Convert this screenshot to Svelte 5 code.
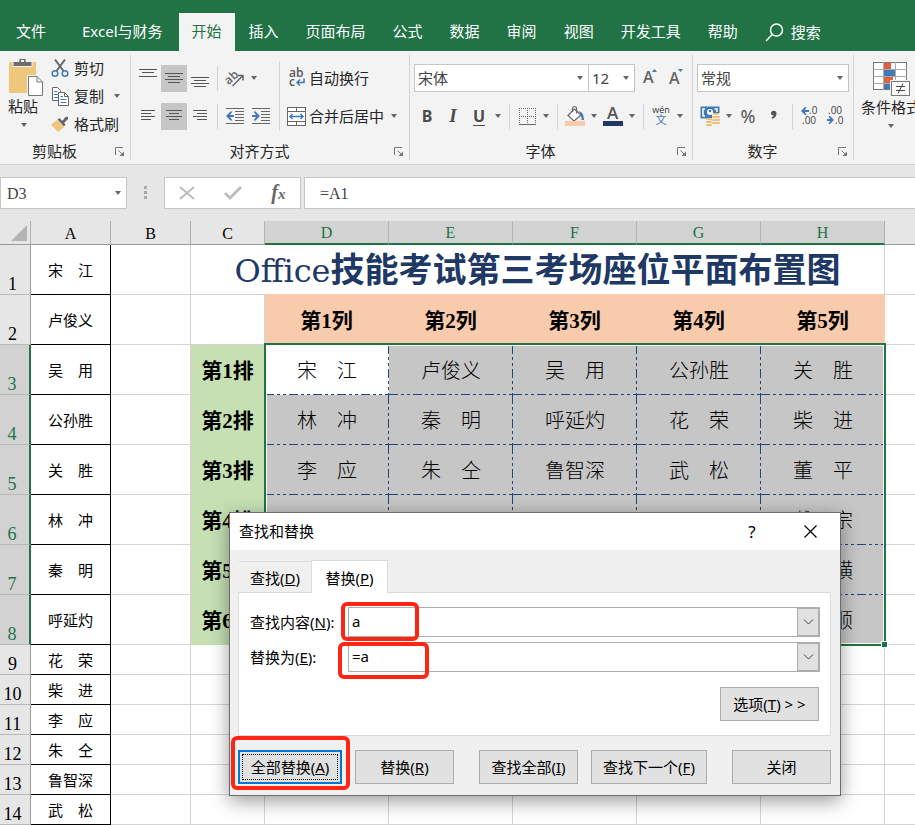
<script>
  const tabs = ['插入', '页面布局', '公式', '数据', '审阅', '视图', '开发工具', '帮助'];
  const seats = [
    ['宋　江', '卢俊义', '吴　用', '公孙胜', '关　胜'],
    ['林　冲', '秦　明', '呼延灼', '花　荣', '柴　进'],
    ['李　应', '朱　仝', '鲁智深', '武　松', '董　平'],
    ['', '', '', '', '戴　宗'],
    ['', '', '', '', '雷　横'],
    ['', '', '', '', '张　顺']
  ];
  const names = seats.flat();
  let findText = $state('a');
  let replaceText = $state('=a');
  let nameBox = $state('D3');
  let formula = $state('=A1');
</script>

{#snippet lines(list)}
  <svg width="18" height="18" viewBox="0 0 18 18" aria-hidden="true">
    {#each list as [x, y, w]}<rect {x} {y} width={w} height="1" fill="#555" />{/each}
  </svg>
{/snippet}

{#snippet launcher()}
  <button class="launcher" aria-label="更多设置">
    <svg width="10" height="10" viewBox="0 0 10 10" fill="none" stroke="#777"><path d="M.5 8V.5H8" /><path d="M3.500 3.500L8 8" /><path d="M9 4.500V9H4.500z" fill="#777" stroke="none" /></svg>
  </button>
{/snippet}

<div class="app">
  <nav class="tabs">
    <button class="file">文件</button>
    <button class="addin">Excel与财务</button>
    <button class="active">开始</button>
    {#each tabs as t}<button>{t}</button>{/each}
    <button class="search">
      <svg width="19" height="19" viewBox="0 0 19 19" fill="none" stroke="#fff" stroke-width="1.500"><circle cx="11.500" cy="7" r="6" /><path d="M7.200 11.500L1 18" /></svg>搜索
    </button>
  </nav>

  <div class="ribbon">
    <section class="group clip">
      <div class="body">
        <button class="big">
          <svg width="36" height="38" viewBox="0 0 36 38">
            <rect x="1" y="4" width="27" height="31" rx="1" fill="#eec77c" />
            <path d="M5 8.500V3.500H11V1.500Q11 .5 12 .5H17Q18 .5 18 1.500V3.500H24V8.500z" fill="#6d6d6d" stroke="#f3f3f3" />
            <rect x="13" y="2" width="3" height="2" fill="#f3f3f3" />
            <path d="M19 17H30L36 23V38H19z" fill="#f3f3f3" />
            <path d="M20.500 18.500H29L34.500 24V37.500H20.500z" fill="#fff" stroke="#777" />
            <path d="M29 18.500V24H34.500" fill="none" stroke="#777" />
          </svg>
          <span>粘贴</span><i class="caret"></i>
        </button>
        <div class="stack">
          <button class="item">
            <svg width="18" height="20" viewBox="0 0 18 20" fill="none"><path d="M4 1.500L12.500 13M14 1.500L5.500 13" stroke="#666" stroke-width="2" /><circle cx="4" cy="15.500" r="2.800" stroke="#4178b8" stroke-width="1.500" /><circle cx="14" cy="15.500" r="2.800" stroke="#4178b8" stroke-width="1.500" /></svg>
            <span>剪切</span>
          </button>
          <button class="item">
            <svg width="18" height="19" viewBox="0 0 18 19" fill="#fff" stroke="#666"><path d="M1.500.5H6.500L9.500 3.500V13.500H1.500z" /><path d="M3 4.500H6M3 7.500H7M3 10.500H7" stroke="#4178b8" /><path d="M7.500 5.500H13.500L17.500 9.500V18.500H7.500z" /><path d="M13.500 5.500V9.500H17.500" fill="none" /><path d="M9.500 9.500H12M9.500 12.500H15.500M9.500 15.500H15.500" stroke="#4178b8" /></svg>
            <span>复制</span><i class="caret"></i>
          </button>
          <button class="item">
            <svg width="18" height="16" viewBox="0 0 18 16"><path d="M6 4L13 11L9 14.500L7 16L0 8.500z" fill="#eec77c" /><path d="M6.500 3.500L8.500 2L14.500 8.500L13 10.500z" fill="#666" /><path d="M10.500 5.500L13 3Q13.500 .5 16 .5Q17.500 1 17 3L12.500 7.500z" fill="#666" /></svg>
            <span>格式刷</span>
          </button>
        </div>
      </div>
      <footer><span>剪贴板</span>{@render launcher()}</footer>
    </section>

    <section class="group align">
      <div class="body">
        <div class="rows">
          <div class="row">
            <button class="ic" aria-label="顶端对齐">{@render lines([[0, 0, 18], [3, 3, 12], [0, 7, 18]])}</button>
            <button class="ic on" aria-label="垂直居中">{@render lines([[0, 4, 18], [3, 7, 12], [0, 10, 18], [3, 13, 12]])}</button>
            <button class="ic" aria-label="底端对齐">{@render lines([[0, 8, 18], [3, 11, 12], [0, 14, 18], [3, 17, 12]])}</button>
            <i class="sep"></i>
            <button class="ic" aria-label="方向">
              <svg width="20" height="18" viewBox="0 0 20 18"><text x="0" y="13" transform="rotate(-42 6 10)" class="orient">ab</text><path d="M7.500 17L17.500 7M13 6.500H18V11.500" fill="none" stroke="#666" stroke-width="1.500" /></svg>
            </button>
            <button class="drop" aria-label="方向选项"><i class="caret"></i></button>
          </div>
          <div class="row">
            <button class="ic" aria-label="左对齐">{@render lines([[2, 3, 14], [2, 6, 10], [2, 9, 14], [2, 12, 10]])}</button>
            <button class="ic on" aria-label="居中">{@render lines([[1, 3, 16], [4, 6, 10], [1, 9, 16], [4, 12, 10]])}</button>
            <button class="ic" aria-label="右对齐">{@render lines([[2, 3, 14], [6, 6, 10], [2, 9, 14], [6, 12, 10]])}</button>
            <i class="sep"></i>
            <button class="ic" aria-label="减少缩进"><svg width="18" height="16" viewBox="0 0 18 16"><path d="M0 .5H18M9 3.500H18M9 6.500H18M9 9.500H18M9 12.500H18M0 15.500H18" stroke="#666" /><path d="M0 8L4.500 3.500H6.500L4 7H8V9H4L6.500 12.500H4.500z" fill="#4178b8" /></svg></button>
            <button class="ic" aria-label="增加缩进"><svg width="18" height="16" viewBox="0 0 18 16"><path d="M0 .5H18M9 3.500H18M9 6.500H18M9 9.500H18M9 12.500H18M0 15.500H18" stroke="#666" /><path d="M8 8L3.500 3.500H1.500L4 7H0V9H4L1.500 12.500H3.500z" fill="#4178b8" /></svg></button>
          </div>
        </div>
        <i class="sep tall"></i>
        <div class="rows">
          <button class="item wide">
            <svg width="20" height="20" viewBox="0 0 20 20"><text x="2" y="9" class="wrap">ab</text><text x="2" y="18" class="wrap">c</text><path d="M17 10.500V14.500H10M13 11.500L10 14.500L13 17.500" fill="none" stroke="#4178b8" stroke-width="1.500" /></svg>
            <span>自动换行</span>
          </button>
          <button class="item wide">
            <svg width="20" height="19" viewBox="0 0 20 19"><rect x=".5" y=".5" width="18" height="18" fill="#fff" stroke="#666" /><path d="M0 4.500H19M0 14.500H19M9.500 0V4M9.500 15V19" stroke="#666" /><path d="M3 9.500H16M5.500 7L3 9.500L5.500 12M13.500 7L16 9.500L13.500 12" fill="none" stroke="#4178b8" stroke-width="1.500" /></svg>
            <span>合并后居中</span><i class="caret"></i>
          </button>
        </div>
      </div>
      <footer><span>对齐方式</span>{@render launcher()}</footer>
    </section>

    <section class="group font">
      <div class="body rows">
        <div class="row fields">
          <label class="sel family"><select aria-label="字体"><option>宋体</option></select><i class="caret"></i></label>
          <label class="sel size"><select aria-label="字号"><option>12</option></select><i class="caret"></i></label>
          <button class="ic grow" aria-label="增大字号"><svg width="16" height="18" viewBox="0 0 16 18"><text x="1" y="14" class="letter">A</text><path d="M10 3L12.500 0L15 3z" fill="#4178b8" /></svg></button>
          <button class="ic" aria-label="减小字号"><svg width="16" height="18" viewBox="0 0 16 18"><text x="1" y="15" class="letter">A</text><path d="M10 0L12.500 3L15 0z" fill="#4178b8" /></svg></button>
        </div>
        <div class="row">
          <button class="ic fmt"><b>B</b></button>
          <button class="ic fmt it"><b>I</b></button>
          <button class="ic fmt"><b class="und">U</b></button>
          <button class="drop" aria-label="下划线选项"><i class="caret"></i></button>
          <i class="sep"></i>
          <button class="ic" aria-label="边框"><svg width="17" height="17" viewBox="0 0 17 17" stroke="#666" fill="none"><path d="M0 .5H17M0 8.500H17M.5 0V16M8.500 0V16M16.500 0V16" stroke-dasharray="1 1" /><path d="M0 16.500H17" /></svg></button>
          <button class="drop" aria-label="边框选项"><i class="caret"></i></button>
          <i class="sep"></i>
          <button class="ic" aria-label="填充颜色"><svg width="20" height="20" viewBox="0 0 20 20"><path d="M3 9.500L9.500 3L16 9L9 15z" fill="#fff" stroke="#666" stroke-width="1.200" /><path d="M7.500 6V2Q8 .5 9.500 .5T11.500 2V7.500" fill="none" stroke="#666" stroke-width="1.200" /><path d="M13.500 5Q19 6 19 14H16.500Q17 9 13.500 5z" fill="#4178b8" /><rect y="15" width="20" height="5" fill="#f8cbad" /></svg></button>
          <button class="drop" aria-label="填充选项"><i class="caret"></i></button>
          <button class="ic" aria-label="字体颜色"><svg width="20" height="20" viewBox="0 0 20 20"><text x="4" y="13" class="color">A</text><rect y="15" width="20" height="5" fill="#1f3864" /></svg></button>
          <button class="drop" aria-label="字体颜色选项"><i class="caret"></i></button>
          <i class="sep"></i>
          <button class="ic" aria-label="拼音"><svg width="18" height="20" viewBox="0 0 18 20"><text x="9" y="7" text-anchor="middle" class="wen">wén</text><text x="9" y="18" text-anchor="middle" class="zi">文</text></svg></button>
          <button class="drop" aria-label="拼音选项"><i class="caret"></i></button>
        </div>
      </div>
      <footer><span>字体</span>{@render launcher()}</footer>
    </section>

    <section class="group number">
      <div class="body rows">
        <div class="row fields">
          <label class="sel format"><select aria-label="数字格式"><option>常规</option></select><i class="caret"></i></label>
        </div>
        <div class="row">
          <button class="ic" aria-label="会计数字格式"><svg width="20" height="20" viewBox="0 0 20 20"><path d="M.5 .5H19.500V7H12V12.500H.5z" fill="#4178b8" /><path d="M5 3H3V10H5M14.500 3H17V6" fill="none" stroke="#fff" stroke-width="1.500" /><circle cx="10" cy="6" r="3" fill="#fff" /><circle cx="10" cy="5" r="1.300" fill="#4178b8" /><path d="M14 8H18M13 11H19M13 14H19M13 17H19M7 13H11M7 16H11M7 19H11" stroke="#eec077" stroke-width="2" stroke-linecap="round" /></svg></button>
          <button class="drop" aria-label="会计格式选项"><i class="caret"></i></button>
          <button class="ic pct">%</button>
          <button class="ic" aria-label="千位分隔样式"><svg width="8" height="12" viewBox="0 0 8 12"><path d="M1 3.500A2.500 2.500 0 1 1 6.500 3.500Q6.500 7.500 2 9L1.500 7.500Q3.500 7 3.500 5.500Q1 5.500 1 3.500z" fill="#555" /></svg></button>
          <i class="sep"></i>
          <button class="ic" aria-label="增加小数位数"><svg width="18" height="20" viewBox="0 0 18 20"><text x="8" y="8" class="dec">.0</text><text x="1" y="18" class="dec">.00</text><path d="M0 5L4 1H5.500L4 4H8V6H4L5.500 9H4z" fill="#4178b8" /></svg></button>
          <button class="ic" aria-label="减少小数位数"><svg width="18" height="20" viewBox="0 0 18 20"><text x="1" y="8" class="dec">.00</text><text x="8" y="18" class="dec">.0</text><path d="M7 14L3 10H1.500L3 13H0V15H3L1.500 18H3z" fill="#4178b8" /></svg></button>
        </div>
      </div>
      <footer><span>数字</span>{@render launcher()}</footer>
    </section>

    <section class="group cond">
      <button class="big">
        <svg width="38" height="38" viewBox="0 0 38 38">
          <rect x="1.500" y="3.500" width="33" height="27" fill="#fff" stroke="#777" />
          <path d="M1 10.500H35M1 17.500H35M1 24.500H35M11.500 3V31M23.500 3V31" stroke="#aaa" />
          <rect x="12" y="4" width="7" height="6" fill="#dc6141" /><rect x="12" y="11" width="11" height="6" fill="#4178b8" /><rect x="12" y="18" width="9" height="6" fill="#dc6141" /><rect x="12" y="25" width="6" height="5" fill="#4178b8" />
          <rect x="18" y="21" width="20" height="17" fill="#f3f3f3" /><rect x="19.500" y="22.500" width="18" height="14" fill="#fff" stroke="#777" />
          <path d="M24 27.500H33M24 31.500H33M31 24.500L26 34.500" stroke="#444" />
        </svg>
        <span>条件格式</span><i class="caret"></i>
      </button>
    </section>
  </div>

  <div class="formula">
    <label class="namebox"><input aria-label="名称框" bind:value={nameBox} /><i class="caret"></i></label>
    <i class="grip"></i>
    <div class="fx">
      <button aria-label="取消"><svg width="16" height="14" viewBox="0 0 16 14" fill="none" stroke="#bdbdbd" stroke-width="2"><path d="M1 1L15 13M15 1L1 13" /></svg></button>
      <button aria-label="输入"><svg width="18" height="14" viewBox="0 0 18 14" fill="none" stroke="#bdbdbd" stroke-width="3"><path d="M1 7L6 12L17 1" /></svg></button>
      <button class="fn" aria-label="插入函数">f<small>x</small></button>
    </div>
    <input class="bar" aria-label="编辑栏" bind:value={formula} />
  </div>

  <table>
    <colgroup><col class="c0" /><col class="ca" /><col class="ca" /><col class="cc" /><col class="cd" /><col class="cd" /><col class="cd" /><col class="cd" /><col class="cd" /><col /></colgroup>
    <thead>
      <tr>
        <th class="corner"><svg width="16" height="16" viewBox="0 0 16 16"><path d="M16 0V16H0z" fill="#b4b4b4" /></svg></th>
        {#each ['A', 'B', 'C', 'D', 'E', 'F', 'G', 'H'] as c, i}<th class:sel-col={i > 2}>{c}</th>{/each}
        <th class="rest"></th>
      </tr>
    </thead>
    <tbody>
      {#each Array(14) as _, r}
        <tr class:short={r > 7}>
          <th class:sel-row={r > 1 && r < 8}>{r + 1}</th>
          <td class="name">{names[r]}</td>
          <td></td>
          {#if r === 0}
            <td class="title" colspan="6"><span>Office</span>技能考试第三考场座位平面布置图</td>
          {:else if r === 1}
            <td></td>
            {#each [1, 2, 3, 4, 5] as n}<td class="colhead">第{n}列</td>{/each}
          {:else if r < 8}
            <td class="rowhead">第{r - 1}排</td>
            {#each seats[r - 2] as s, i}
              <td class="seat" class:first={r === 2 && i === 0}>{s}{#if r === 2 && i === 0}<div class="selection"><i></i></div>{/if}</td>
            {/each}
          {:else}
            <td></td><td></td><td></td><td></td><td></td><td></td>
          {/if}
          <td class="rest"></td>
        </tr>
      {/each}
    </tbody>
  </table>

  <div class="dialog" role="dialog" aria-label="查找和替换">
    <header>
      <span>查找和替换</span>
      <button class="help" aria-label="帮助">?</button>
      <button aria-label="关闭窗口"><svg width="13" height="13" viewBox="0 0 13 13" stroke="#000" fill="none" stroke-width="1.200"><path d="M.5 .5L12.500 12.500M12.500 .5L.5 12.500" /></svg></button>
    </header>
    <div class="dtabs"><button>查找(<u>D</u>)</button><button class="active">替换(<u>P</u>)</button></div>
    <div class="panel">
      <div class="field">
        <label for="find">查找内容(<u>N</u>):</label>
        <div class="combo"><input id="find" bind:value={findText} /><button aria-label="查找历史"><svg width="11" height="6" viewBox="0 0 11 6" fill="none" stroke="#444"><path d="M1 .5L5.500 5L10 .5" /></svg></button></div>
        <i class="mark m1"></i>
      </div>
      <div class="field">
        <label for="replace">替换为(<u>E</u>):</label>
        <div class="combo"><input id="replace" bind:value={replaceText} /><button aria-label="替换历史"><svg width="11" height="6" viewBox="0 0 11 6" fill="none" stroke="#444"><path d="M1 .5L5.500 5L10 .5" /></svg></button></div>
        <i class="mark m2"></i>
      </div>
      <button class="btn opt">选项(<u>T</u>) &gt; &gt;</button>
    </div>
    <div class="actions">
      <div class="pair">
        <div class="marked"><button class="btn default">全部替换(<u>A</u>)</button><i class="mark m3"></i></div>
        <button class="btn">替换(<u>R</u>)</button>
      </div>
      <div class="pair"><button class="btn">查找全部(<u>I</u>)</button><button class="btn long">查找下一个(<u>F</u>)</button></div>
      <button class="btn">关闭</button>
    </div>
  </div>
</div>

<style>
  :global(body) { margin: 0; overflow: hidden; background: #fff; }
  .app { position: relative; font: 15px/20px 'Noto Sans', 'Noto Sans CJK SC', sans-serif; color: #262626; }
  .app :is(button, input, select) { font: inherit; color: inherit; box-sizing: border-box; }
  .app button { background: none; border: 0; padding: 0; white-space: nowrap; }
  svg { display: block; flex: none; overflow: visible; }

  .app .tabs { display: flex; align-items: flex-end; gap: 1px; height: 51px; background: #217346; overflow: hidden; }
  .app .tabs button { height: 38px; padding: 0 13px 2px; color: #fff; display: flex; align-items: center; flex: none; }
  .app .tabs .file { padding-left: 16px; padding-right: 21px; }
  .app .tabs .addin { padding-left: 14px; padding-right: 15px; }
  .app .tabs .active { background: #f3f3f3; color: #217346; }
  .app .tabs .search { gap: 7px; padding-bottom: 0; }

  .ribbon { display: flex; height: 113px; background: #f3f3f3; border-bottom: 1px solid #d2d2d2; overflow: hidden; }
  .group { position: relative; flex: none; display: flex; flex-direction: column; justify-content: space-between; box-sizing: border-box; padding: 3px 0 0 4px; }
  .group::after { content: ''; position: absolute; right: 0; top: 4px; bottom: 4px; width: 1px; background: #d2d2d2; }
  .clip { width: 131px; }
  .align { width: 279px; }
  .font { width: 283px; }
  .number { width: 161px; }
  .cond { flex: 1 0 66px; }
  .cond::after { display: none; }
  .body { display: flex; }
  .group footer { display: flex; align-items: center; height: 24px; padding-right: 4px; }
  .group footer span { flex: 1; padding: 0 10px 3px 0; text-align: center; }
  .launcher { width: 12px; }
  .caret { flex: none; display: block; width: 0; height: 0; border: 3px solid transparent; border-top: 4px solid #666; border-bottom: 0; }
  .app .big { display: flex; flex-direction: column; align-items: center; }
  .app .clip .big { width: 38px; padding: 4px 0 0 4px; box-sizing: content-box; align-items: flex-start; }
  .app .cond .big { width: 66px; padding-top: 5px; }
  .clip .big .caret { margin-left: 13px; }
  .big .caret { margin-top: 7px; }
  .stack { margin-left: 5px; }
  .app .item { display: flex; align-items: center; height: 28px; gap: 5px; }
  .stack .caret, .wide .caret { margin-left: 5px; }
  .rows { display: flex; flex-direction: column; gap: 10px; padding-top: 10px; }
  .row { display: flex; align-items: center; height: 28px; }
  .app .ic { width: 26px; height: 27px; display: flex; align-items: center; justify-content: center; flex: none; }
  .app .on { background: #c6c6c6; }
  .app .drop { width: 12px; height: 27px; display: flex; align-items: center; justify-content: center; }
  .sep { flex: none; width: 1px; height: 25px; margin: 0 4px 0 5px; background: #d2d2d2; }
  .align .sep { margin-left: 4px; }
  .align .tall { height: 70px; margin: 7px 7px 0 5px; }
  .app .wide { gap: 2px; }
  .app .fmt { font-size: 16px; color: #4d4d4d; }
  .it b { font-family: 'Liberation Serif', serif; font-style: italic; font-size: 19px; }
  .und { line-height: 18px; border-bottom: 1px solid #4d4d4d; }
  .app .pct { font-size: 18px; color: #555; }
  .orient { font: 600 12px 'Open Sans', sans-serif; fill: #666; }
  .wrap { font: 600 12px 'Open Sans', sans-serif; fill: #555; }
  .letter { font: 600 16px 'Open Sans', sans-serif; fill: #666; }
  .color { font: 600 17px 'Open Sans', sans-serif; fill: #555; }
  .wen { font: 9px 'Open Sans', sans-serif; fill: #333; }
  .zi { font: 11px 'Noto Sans CJK SC', sans-serif; fill: #4178b8; }
  .dec { font: 10px 'Open Sans', sans-serif; fill: #444; }

  .sel { position: relative; height: 28px; box-sizing: border-box; border: 1px solid #c6c6c6; background: #fff; color: #444; }
  .app .sel select { appearance: none; width: 100%; height: 26px; border: 0; background: none; padding: 0 3px; }
  .sel .caret, .namebox .caret { position: absolute; right: 5px; top: 50%; margin-top: -2px; }
  .family { width: 175px; }
  .size { width: 47px; margin-left: -1px; }
  .format { width: 152px; }
  .grow { margin-left: 2px; }

  .formula { display: flex; padding: 12px 0; background: #e6e6e6; }
  .formula input, .namebox, .fx { height: 32px; box-sizing: border-box; border: 1px solid #c6c6c6; background: #fff; }
  .app .formula input { font: 16px/20px 'Liberation Serif', 'Noto Sans CJK SC', serif; color: #444; }
  .namebox { position: relative; width: 127px; }
  .app .namebox input { border: 0; width: 100%; height: 30px; padding: 2px 6px 0; background: none; }
  .grip { width: 3px; height: 13px; margin: 9px 17px 0; background: repeating-linear-gradient(#aaa 0 3px, transparent 3px 5px); }
  .fx { width: 137px; display: flex; align-items: center; justify-content: space-around; color: #666; }
  .app .fx .fn { font: italic 700 20px/28px 'Liberation Serif', serif; }
  .fn small { font-size: 15px; }
  .app .bar { flex: 1; min-width: 0; margin-left: 3px; padding: 2px 15px 0; border-right: 0; border-radius: 0; }

  table { width: 100%; table-layout: fixed; border-collapse: separate; border-spacing: 0; color: #000; font-family: 'Liberation Serif', 'Noto Sans CJK SC', serif; }
  .c0 { width: 31px; }
  .ca { width: 80px; }
  .cc { width: 74px; }
  .cd { width: 124px; }
  td, th { box-sizing: border-box; padding: 2px 0 0; height: 50px; border-right: 1px solid #d4d4d4; border-bottom: 1px solid #d4d4d4; text-align: center; white-space: nowrap; }
  .short > * { height: 30px; }
  th { background: #e6e6e6; font: 18px/20px 'Liberation Serif', serif; }
  thead th { height: 24px; padding-top: 2px; font-size: 16px; border-color: #b1b1b1; border-bottom-color: #9b9b9b; }
  thead .sel-col { background: #d2d2d2; color: #217346; border-bottom: 2px solid #217346; }
  thead .corner { padding: 0 3px 0 0; vertical-align: middle; }
  .corner svg { margin-left: auto; }
  tbody th { vertical-align: bottom; padding-right: 5px; border-right-color: #9b9b9b; border-bottom-color: #b8b8b8; }
  tbody th.sel-row { background: #d2d2d2; color: #217346; border-right: 2px solid #217346; }
  .name { font-size: 15px; border-color: #000; }
  .title { color: #203864; font-size: 34px; font-weight: 700; line-height: 40px; border-bottom: 0; background: linear-gradient(90deg, #d4d4d4 74px, #f8cbad 74px) bottom / 100% 1px no-repeat; }
  .title span { font-family: 'DejaVu Serif', serif; font-size: 32px; font-weight: 400; }
  .colhead { background: #f8cbad; border-color: #f8cbad; font-size: 21px; font-weight: 700; }
  .rowhead { background: #c6e0b4; border-color: #c6e0b4; font-size: 21px; font-weight: 700; }
  .seat { font-size: 20px; font-weight: 300; border: 0; background:
    repeating-linear-gradient(90deg, #264478 0 9px, transparent 9px 12px, #264478 12px 15px, transparent 15px 18px, #264478 18px 21px, transparent 21px 24px) bottom / 100% 1px no-repeat,
    repeating-linear-gradient(#264478 0 9px, transparent 9px 12px, #264478 12px 15px, transparent 15px 18px, #264478 18px 21px, transparent 21px 24px) right / 1px 100% no-repeat, #c6c6c6; }
  .first { position: relative; background-color: #fff; }
  .selection { position: absolute; left: -1px; top: -2px; width: 622px; height: 303px; box-sizing: border-box; border: 2px solid #217346; box-shadow: inset 0 0 0 1px #fff; }
  .selection i { position: absolute; right: -4px; bottom: -4px; width: 5px; height: 5px; background: #217346; border: 1px solid #fff; }
  tr .rest { border-right: 0; }

  .dialog { position: absolute; left: 229px; top: 512px; width: 612px; height: 284px; box-sizing: border-box; border: 1px solid #6c6c6c; background: #f0f0f0; color: #000; box-shadow: 0 5px 18px rgba(0, 0, 0, .4); }
  .dialog header { display: flex; align-items: center; height: 37px; padding-left: 9px; background: #fff; }
  .dialog header span { flex: 1; padding-bottom: 2px; }
  .dialog header button { width: 60px; height: 37px; display: flex; align-items: center; justify-content: center; }
  .app .help { width: 56px; font-size: 17px; }
  .dtabs { display: flex; align-items: flex-end; height: 42px; padding-left: 9px; }
  .app .dtabs button { height: 31px; width: 72px; padding-top: 2px; border-top: 1px solid #dcdcdc; }
  .app .dtabs .active { position: relative; height: 33px; width: 77px; margin-bottom: -1px; padding-top: 1px; background: #fff; border: 1px solid #dcdcdc; border-bottom: 0; }
  .panel { display: flex; flex-direction: column; gap: 5px; height: 144px; margin: 0 9px 0 8px; padding: 14px 10px 0 11px; box-sizing: border-box; background: #fff; border: 1px solid #dcdcdc; }
  .field { position: relative; display: flex; align-items: center; }
  .field label { width: 98px; }
  .combo { flex: 1; display: flex; height: 30px; box-sizing: border-box; border: 1px solid #adadad; }
  .app .combo input { flex: 1; min-width: 0; border: 0; padding: 0 3px 2px; background: none; }
  .app .combo button { width: 22px; display: flex; align-items: center; justify-content: center; background: #e1e1e1; border: 1px solid #adadad; }
  .app .btn { width: 99px; height: 34px; background: #e1e1e1; border: 1px solid #adadad; }
  .app .opt { align-self: flex-end; margin: 10px 1px 0 0; }
  .app .long { width: 116px; }
  .app .default { width: 104px; border: 2px solid #0078d7; outline: 1px dotted #000; outline-offset: -5px; }
  .actions { display: flex; justify-content: space-between; margin: 14px 9px 0 8px; }
  .pair { display: flex; gap: 13px; }
  .marked { position: relative; }
  .mark { position: absolute; box-sizing: border-box; border: 4px solid #ff2514; border-radius: 6px; pointer-events: none; }
  .m1 { left: 91px; top: -5px; width: 78px; height: 39px; }
  .m2 { left: 88px; top: 0; width: 91px; height: 37px; }
  .m3 { left: -7px; top: -14px; width: 119px; height: 54px; }
</style>
